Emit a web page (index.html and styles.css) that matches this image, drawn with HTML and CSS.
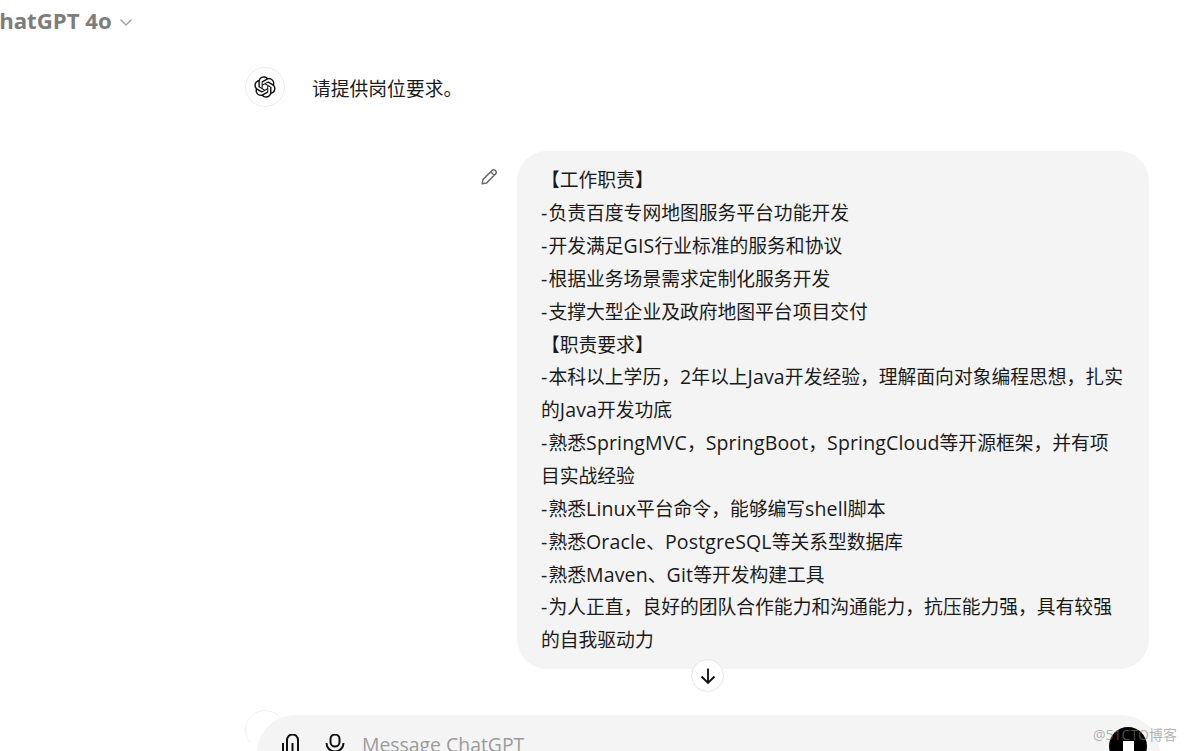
FILE: index.html
```html
<!DOCTYPE html>
<html lang="zh">
<head>
<meta charset="utf-8">
<title>ChatGPT 4o</title>
<link rel="stylesheet" href="styles.css">
</head>
<body>
<div class="app">
  <header class="topbar">
    <span class="model">ChatGPT 4o</span>
    <svg class="chev" viewBox="0 0 14 9" width="14" height="9"><path d="M1.5 1.5 7 7l5.500-5.500" fill="none" stroke="#a3a3a3" stroke-width="1.500"/></svg>
  </header>
  <main class="thread">
    <section class="assistant">
      <div class="avatar">
        <svg viewBox="0 0 41 41" width="22" height="22"><path fill="#0d0d0d" d="M37.5324 16.8707C37.9808 15.5241 38.1363 14.0974 37.9886 12.6859C37.8409 11.2744 37.3934 9.91076 36.676 8.68622C35.6126 6.83404 33.9882 5.3676 32.0373 4.4985C30.0864 3.62941 27.9098 3.40259 25.8215 3.85078C24.8796 2.7893 23.7219 1.94125 22.4257 1.36341C21.1295 0.785575 19.7249 0.491269 18.3058 0.500197C16.1708 0.495044 14.0893 1.16803 12.3614 2.42214C10.6335 3.67624 9.34853 5.44666 8.6917 7.47815C7.30085 7.76286 5.98686 8.3414 4.8377 9.17505C3.68854 10.0087 2.73073 11.0782 2.02839 12.312C0.956464 14.1591 0.498905 16.2988 0.721698 18.4228C0.944492 20.5467 1.83612 22.5449 3.268 24.1293C2.81966 25.4759 2.66413 26.9026 2.81182 28.3141C2.95951 29.7256 3.40701 31.0892 4.12437 32.3138C5.18791 34.1659 6.8123 35.6322 8.76321 36.5013C10.7141 37.3704 12.8907 37.5973 14.9789 37.1492C15.9208 38.2107 17.0786 39.0587 18.3747 39.6366C19.6709 40.2144 21.0755 40.5087 22.4946 40.4998C24.6307 40.5054 26.7133 39.8321 28.4418 38.5772C30.1704 37.3223 31.4556 35.5506 32.1119 33.5179C33.5027 33.2332 34.8167 32.6547 35.9659 31.821C37.115 30.9874 38.0728 29.9178 38.7752 28.684C39.8458 26.8371 40.3023 24.6979 40.0789 22.5748C39.8556 20.4517 38.9639 18.4544 37.5324 16.8707ZM22.4978 37.8849C20.7443 37.8874 19.0459 37.2733 17.6994 36.1501C17.7601 36.117 17.8666 36.0586 17.936 36.0161L25.9004 31.4156C26.1003 31.3019 26.2663 31.137 26.3813 30.9378C26.4964 30.7386 26.5563 30.5124 26.5549 30.2825V19.0542L29.9213 20.998C29.9389 21.0068 29.9541 21.0198 29.9656 21.0359C29.977 21.052 29.9842 21.0707 29.9867 21.0902V30.3889C29.9842 32.375 29.1946 34.2791 27.7909 35.6841C26.3872 37.0892 24.4838 37.8806 22.4978 37.8849ZM6.39227 31.0064C5.51397 29.4888 5.19742 27.7107 5.49804 25.9832C5.55718 26.0187 5.66048 26.0818 5.73461 26.1244L13.699 30.7248C13.8975 30.8408 14.1233 30.902 14.3532 30.902C14.583 30.902 14.8088 30.8408 15.0073 30.7248L24.731 25.1103V28.9979C24.7321 29.0177 24.7283 29.0376 24.7199 29.0556C24.7115 29.0736 24.6988 29.0893 24.6829 29.1012L16.6317 33.7497C14.9096 34.7416 12.8643 35.0097 10.9447 34.4954C9.02506 33.9811 7.38785 32.7263 6.39227 31.0064ZM4.29707 13.6194C5.17156 12.0998 6.55279 10.9364 8.19885 10.3327C8.19885 10.4013 8.19491 10.5228 8.19491 10.6071V19.808C8.19351 20.0378 8.25334 20.2638 8.36823 20.4629C8.48312 20.6619 8.64893 20.8267 8.84863 20.9404L18.5723 26.5542L15.206 28.4979C15.1894 28.5089 15.1703 28.5155 15.1505 28.5173C15.1307 28.5191 15.1107 28.516 15.0924 28.5082L7.04046 23.8557C5.32135 22.8601 4.06716 21.2235 3.55289 19.3046C3.03862 17.3858 3.30624 15.3413 4.29707 13.6194ZM31.955 20.0556L22.2312 14.4411L25.5976 12.4981C25.6142 12.4872 25.6333 12.4805 25.6531 12.4787C25.6729 12.4769 25.6928 12.4801 25.7111 12.4879L33.7631 17.1364C34.9967 17.849 36.0017 18.8982 36.6606 20.1613C37.3194 21.4244 37.6047 22.849 37.4832 24.2684C37.3617 25.6878 36.8382 27.0432 35.9743 28.1759C35.1103 29.3086 33.9415 30.1717 32.6047 30.6641C32.6047 30.5947 32.6047 30.4733 32.6047 30.3889V21.188C32.6066 20.9586 32.5474 20.7328 32.4332 20.5338C32.319 20.3348 32.154 20.1698 31.955 20.0556ZM35.3055 15.0128C35.2464 14.9765 35.1431 14.9142 35.069 14.8717L27.1045 10.2712C26.906 10.1554 26.6803 10.0943 26.4504 10.0943C26.2206 10.0943 25.9948 10.1554 25.7963 10.2712L16.0726 15.8858V11.9982C16.0715 11.9783 16.0753 11.9585 16.0837 11.9405C16.0921 11.9225 16.1048 11.9068 16.1207 11.8949L24.1719 7.25025C25.4053 6.53903 26.8158 6.19376 28.2383 6.25482C29.6608 6.31589 31.0364 6.78077 32.2044 7.59508C33.3723 8.40939 34.2842 9.53945 34.8334 10.8531C35.3826 12.1667 35.5464 13.6095 35.3055 15.0128ZM14.2424 21.9419L10.8752 19.9981C10.8576 19.9893 10.8423 19.9763 10.8309 19.9602C10.8195 19.9441 10.8122 19.9254 10.8098 19.9058V10.6071C10.8107 9.18295 11.2173 7.78848 11.9819 6.58696C12.7466 5.38544 13.8377 4.42659 15.1275 3.82264C16.4173 3.21869 17.8524 2.99464 19.2649 3.1767C20.6775 3.35876 22.0089 3.93941 23.1034 4.85067C23.0427 4.88379 22.937 4.94215 22.8668 4.98473L14.9024 9.58517C14.7025 9.69878 14.5366 9.86356 14.4215 10.0626C14.3065 10.2616 14.2466 10.4877 14.2479 10.7175L14.2424 21.9419ZM16.071 17.9991L20.4018 15.4978L24.7325 17.9975V22.9985L20.4018 25.4983L16.071 22.9985V17.9991Z"/></svg>
      </div>
      <p class="reply">请提供岗位要求。</p>
    </section>
    <section class="user">
      <button class="edit" aria-label="编辑">
        <svg viewBox="0 0 20 20" width="20" height="20"><path d="M3.200 16.800l.7-4.200L13 3.500c.9-.9 2.300-.9 3.200 0l.3.300c.9.900.9 2.300 0 3.200l-9.100 9.100-4.200.7ZM11.700 4.800l3.500 3.500" fill="none" stroke="#6b6b6b" stroke-width="1.500" stroke-linejoin="round"/></svg>
      </button>
      <div class="bubble">
        <p>【工作职责】</p>
        <p><span class="dash">-</span>负责百度专网地图服务平台功能开发</p>
        <p><span class="dash">-</span>开发满足<span class="en">GIS</span>行业标准的服务和协议</p>
        <p><span class="dash">-</span>根据业务场景需求定制化服务开发</p>
        <p><span class="dash">-</span>支撑大型企业及政府地图平台项目交付</p>
        <p>【职责要求】</p>
        <p><span class="dash">-</span>本科以上学历，<span class="en">2</span>年以上<span class="en">Java</span>开发经验，理解面向对象编程思想，扎实的<span class="en">Java</span>开发功底</p>
        <p><span class="dash">-</span>熟悉<span class="en">SpringMVC</span>，<span class="en">SpringBoot</span>，<span class="en">SpringCloud</span>等开源框架，并有项目实战经验</p>
        <p><span class="dash">-</span>熟悉<span class="en">Linux</span>平台命令，能够编写<span class="en">shell</span>脚本</p>
        <p><span class="dash">-</span>熟悉<span class="en">Oracle</span>、<span class="en">PostgreSQL</span>等关系型数据库</p>
        <p><span class="dash">-</span>熟悉<span class="en">Maven</span>、<span class="en">Git</span>等开发构建工具</p>
        <p><span class="dash">-</span>为人正直，良好的团队合作能力和沟通能力，抗压能力强，具有较强的自我驱动力</p>
      </div>
    </section>
  </main>
  <button class="scroll-down" aria-label="滚动到底部">
    <svg viewBox="0 0 20 20" width="20" height="20"><path d="M10 2.500V17M3.500 10.500 10 17l6.500-6.500" fill="none" stroke="#0d0d0d" stroke-width="1.800"/></svg>
  </button>
  <div class="ghost-avatar"></div>
  <footer class="composer">
    <svg class="clip" viewBox="0 0 20 30" width="20" height="30"><path d="M3 30V9M7 30V6a5.500 5.500 0 0 1 11 0v24M12.500 30V9" fill="none" stroke="#111" stroke-width="2"/></svg>
    <svg class="mic" viewBox="0 0 20 30" width="20" height="30"><path d="M5.500 5a4.500 4.500 0 0 1 9 0v3a4.500 4.500 0 0 1-9 0ZM1.500 9a8.500 8.500 0 0 0 17 0" fill="none" stroke="#111" stroke-width="2"/></svg>
    <span class="placeholder">Message ChatGPT</span>
    <button class="stop" aria-label="停止"><span class="stop-square"></span></button>
  </footer>
  <div class="watermark">@51CTO博客</div>
</div>
</body>
</html>
```
FILE: styles.css
```css
* { box-sizing: border-box; }
html, body { margin: 0; height: 100%; background: #fff; }
body { overflow: hidden; }
.app {
  position: relative;
  width: 1184px;
  height: 751px;
  overflow: hidden;
  font-family: "Open Sans", "Noto Sans CJK SC", sans-serif;
  color: #1a1a1a;
}
p { margin: 0; }
button { border: 0; padding: 0; background: none; font: inherit; }

.topbar {
  display: flex;
  align-items: center;
  gap: 7px;
  height: 42px;
  margin-left: -15px;
}
.model { font-size: 22.200px; font-weight: 700; color: #7d7d7d; line-height: 44px; }
.chev { margin-top: 2px; }

.thread { display: flex; flex-direction: column; }
.assistant {
  display: flex;
  align-items: center;
  gap: 27px;
  margin: 25px 0 0 245px;
}
.avatar {
  width: 40px;
  height: 40px;
  border: 1px solid #ececec;
  border-radius: 50%;
  display: flex;
  align-items: center;
  justify-content: center;
}
.reply { font-size: 18.800px; line-height: 42px; padding-top: 1px; height: 40px; }
.user {
  display: flex;
  align-items: flex-start;
  margin: 44px 0 0 479px;
}
.edit { width: 20px; height: 20px; margin: 16px 18px 0 0; }
.bubble {
  width: 632px;
  padding: 13.300px 24px 11.700px;
  border-radius: 30px;
  background: #f4f4f4;
  font-size: 18.800px;
  line-height: 32.860px;
}
.en { font-size: 19.500px; letter-spacing: 0.150px; line-height: 1; }
.dash { font-size: 19.500px; letter-spacing: 1.200px; line-height: 1; }

.scroll-down {
  position: absolute;
  left: 691px;
  top: 659px;
  width: 33px;
  height: 33px;
  border: 1px solid #e5e5e5;
  border-radius: 50%;
  background: #fff;
  display: flex;
  align-items: center;
  justify-content: center;
}
.ghost-avatar {
  position: absolute;
  left: 245px;
  top: 710px;
  width: 40px;
  height: 40px;
  border: 1px solid #f0f0f0;
  border-radius: 50%;
}
.composer {
  position: absolute;
  left: 257px;
  top: 715px;
  width: 903px;
  height: 90px;
  border-radius: 38px;
  background: #f4f4f4;
  box-shadow: -12px 8px 0 #fff;
  display: flex;
  align-items: flex-start;
  padding-left: 23px;
}
.clip { margin: 19px 0 0 0; flex: none; }
.mic { margin: 19px 0 0 25px; flex: none; }
.placeholder {
  margin: 18px 0 0 17px;
  font-size: 19.400px;
  line-height: 24px;
  color: #9b9b9b;
}
.stop {
  margin: 12px 13px 0 auto;
  width: 38px;
  height: 38px;
  border-radius: 50%;
  background: #000;
  display: flex;
  justify-content: center;
  padding-top: 14px;
}
.stop-square { width: 11px; height: 14px; background: #fff; }
.watermark {
  position: absolute;
  left: 1093px;
  top: 726px;
  font-size: 14px;
  line-height: 18px;
  color: rgba(130, 130, 130, 0.6);
}
```
